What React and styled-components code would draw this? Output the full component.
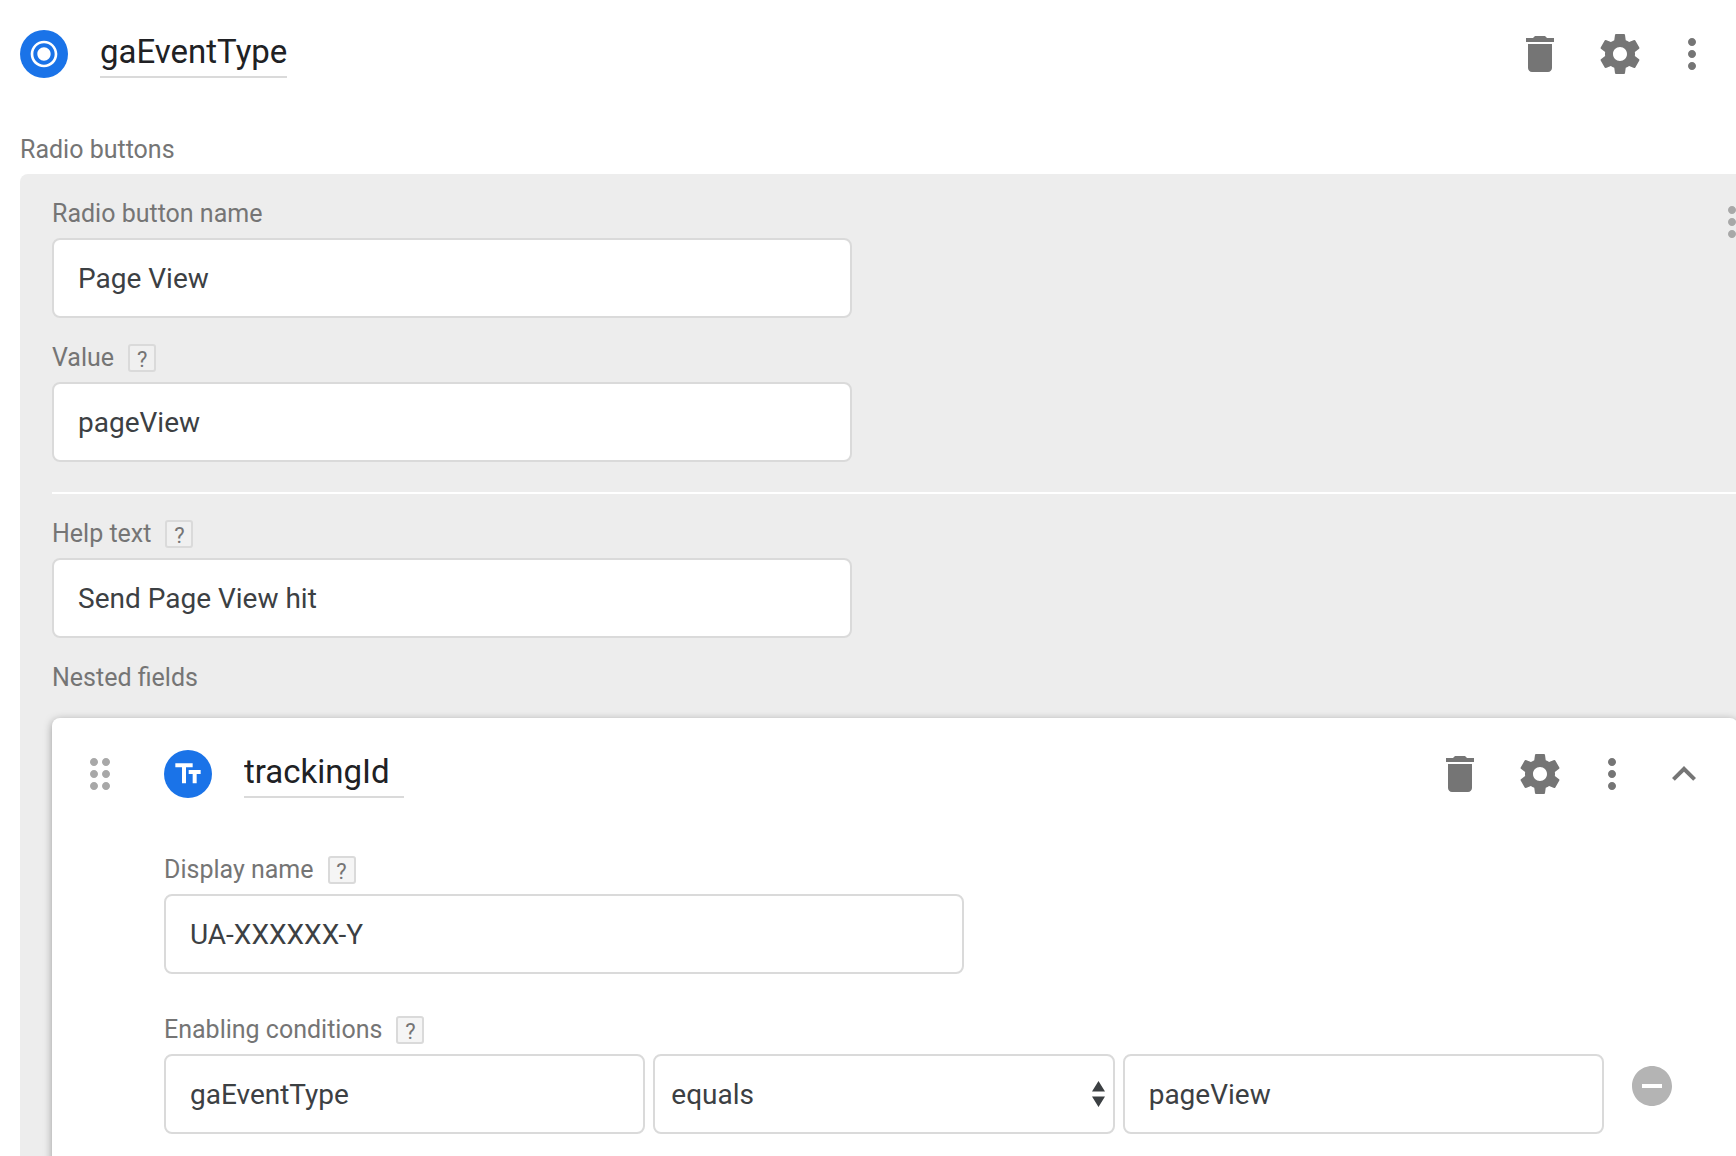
import React, { useState } from 'react';
import styled, { createGlobalStyle } from 'styled-components';

const GlobalStyle = createGlobalStyle`
  * {
    box-sizing: border-box;
  }

  body {
    margin: 0;
    background: #fff;
    font-family: Roboto, 'Liberation Sans', sans-serif;
  }

  button, input, select {
    font-family: inherit;
  }
`;

const Page = styled.main`
  height: 100vh;
  padding: 30px 20px;
  overflow-x: hidden;
  overflow-y: auto;
  scrollbar-width: none;
`;

const Header = styled.header`
  display: flex;
  align-items: center;
  height: 48px;
  margin-bottom: 56px;
`;

const Badge = styled.span`
  display: flex;
  flex: none;
  align-items: center;
  justify-content: center;
  width: 48px;
  height: 48px;
  margin-right: 32px;
  border-radius: 50%;
  background: #1a73e8;
  color: #fff;
`;

const TitleInput = styled.input`
  field-sizing: content;
  min-width: 160px;
  height: 48px;
  padding: 0 0 4px;
  border: 0;
  border-bottom: 2px solid #dadada;
  background: transparent;
  color: #202124;
  font-size: 33px;
  outline: none;
`;

const Actions = styled.div`
  display: flex;
  gap: 24px;
  margin-left: auto;
`;

const IconButton = styled.button`
  display: block;
  flex: none;
  width: 48px;
  height: 48px;
  padding: 0;
  border: 0;
  background: transparent;
  color: ${({ $muted }) => ($muted ? '#a8a8a8' : '#757575')};
  cursor: pointer;

  & + &:nth-child(2) {
    margin-left: 8px;
  }
`;

const DragHandle = styled(IconButton)`
  margin-right: 40px;
  cursor: move;
`;

const LabelRow = styled.div`
  display: flex;
  align-items: center;
  gap: 14px;
  height: 32px;
  margin-bottom: 8px;
  color: #757575;
  font-size: 25px;
  line-height: 32px;
`;

const HelpButton = styled.button`
  width: 28px;
  height: 28px;
  padding: 3px 0 0;
  border: 2px solid #dadada;
  border-radius: 3px;
  background: rgba(255, 255, 255, 0.2);
  color: #757575;
  font-size: 22px;
  line-height: 22px;
  cursor: pointer;
`;

const Panel = styled.section`
  margin-right: -54px;
  padding: 24px 32px 32px;
  border-radius: 8px;
  background: #ededed;
`;

const PanelTop = styled.div`
  display: flex;
  justify-content: space-between;
  margin-right: -18px;
`;

const Fields = styled.div`
  display: flex;
  flex: 1;
  flex-direction: column;
  gap: ${({ $gap }) => $gap || 24}px;
`;

const FieldBox = styled.div`
  width: 100%;
  max-width: ${({ $wide }) => ($wide ? 'none' : '800px')};
`;

const TextInput = styled.input`
  display: block;
  width: 100%;
  min-width: 0;
  height: 80px;
  padding: 0 24px;
  border: 2px solid #dadada;
  border-radius: 8px;
  background: #fff;
  color: #3c4043;
  font-size: 28px;
  outline: none;
`;

const Divider = styled.hr`
  height: 2px;
  margin: 30px -32px 24px 0;
  border: 0;
  background: #fff;
`;

const SectionLabel = styled(LabelRow)`
  margin: 24px 0;
`;

const Card = styled.article`
  padding: 32px 30px 48px 24px;
  border-radius: 8px;
  background: #fff;
  box-shadow: 0 2px 8px rgba(0, 0, 0, 0.35);

  ${HelpButton} {
    background: #f5f5f5;
  }
`;

const CardBody = styled.div`
  padding: 0 32px 0 88px;
`;

const ConditionRow = styled.div`
  display: flex;
  gap: 24px;
`;

const ConditionInputs = styled.div`
  display: flex;
  flex: 1;
  gap: 8px;

  & > input {
    flex: 1 1 480px;
  }
`;

const SelectWrap = styled.div`
  position: relative;
  flex: 1 1 460px;

  svg {
    position: absolute;
    top: 27px;
    right: 10px;
    pointer-events: none;
  }
`;

const Select = styled.select`
  width: 100%;
  height: 80px;
  padding: 0 32px 0 16px;
  border: 2px solid #dadada;
  border-radius: 8px;
  background: #fff;
  color: #3c4043;
  font-size: 28px;
  appearance: none;
  outline: none;
`;

const RemoveButton = styled(IconButton)`
  margin-top: 8px;
  color: #b4b4b4;
`;

const PATHS = {
  trash: 'M6 19c0 1.1.9 2 2 2h8c1.1 0 2-.9 2-2V7H6v12zM19 4h-3.5l-1-1h-5l-1 1H5v2h14V4z',
  gear: 'M19.43 12.98c.04-.32.07-.64.07-.98s-.03-.66-.07-.98l2.11-1.65c.19-.15.24-.42.12-.64l-2-3.46c-.12-.22-.39-.3-.61-.22l-2.49 1c-.52-.4-1.08-.73-1.69-.98l-.38-2.65C14.46 2.18 14.25 2 14 2h-4c-.25 0-.46.18-.49.42l-.38 2.65c-.61.25-1.17.59-1.69.98l-2.49-1c-.23-.09-.49 0-.61.22l-2 3.46c-.13.22-.07.49.12.64l2.11 1.65c-.04.32-.07.65-.07.98s.03.66.07.98l-2.11 1.65c-.19.15-.24.42-.12.64l2 3.46c.12.22.39.3.61.22l2.49-1c.52.4 1.08.73 1.69.98l.38 2.65c.03.24.24.42.49.42h4c.25 0 .46-.18.49-.42l.38-2.65c.61-.25 1.17-.59 1.69-.98l2.49 1c.23.09.49 0 .61-.22l2-3.46c.12-.22.07-.49-.12-.64l-2.11-1.65zM12 15.5c-1.93 0-3.5-1.57-3.5-3.5s1.57-3.5 3.5-3.5 3.5 1.57 3.5 3.5-1.57 3.5-3.5 3.5z',
  more: 'M12 8c1.1 0 2-.9 2-2s-.9-2-2-2-2 .9-2 2 .9 2 2 2zm0 2c-1.1 0-2 .9-2 2s.9 2 2 2 2-.9 2-2-.9-2-2-2zm0 6c-1.1 0-2 .9-2 2s.9 2 2 2 2-.9 2-2-.9-2-2-2z',
  collapse: 'M12 8l-6 6 1.41 1.41L12 10.83l4.59 4.58L18 14z',
  drag: 'M11 18c0 1.1-.9 2-2 2s-2-.9-2-2 .9-2 2-2 2 .9 2 2zm-2-8c-1.1 0-2 .9-2 2s.9 2 2 2 2-.9 2-2-.9-2-2-2zm0-6c-1.1 0-2 .9-2 2s.9 2 2 2 2-.9 2-2-.9-2-2-2zm6 4c1.1 0 2-.9 2-2s-.9-2-2-2-2 .9-2 2 .9 2 2 2zm0 2c-1.1 0-2 .9-2 2s.9 2 2 2 2-.9 2-2-.9-2-2-2zm0 6c-1.1 0-2 .9-2 2s.9 2 2 2 2-.9 2-2-.9-2-2-2z',
  remove: 'M12 2C6.48 2 2 6.48 2 12s4.48 10 10 10 10-4.48 10-10S17.52 2 12 2zm5 11H7v-2h10v2z',
  radio: 'M12 7c-2.76 0-5 2.24-5 5s2.24 5 5 5 5-2.24 5-5-2.24-5-5-5zm0-5C6.48 2 2 6.48 2 12s4.48 10 10 10 10-4.48 10-10S17.52 2 12 2zm0 18c-4.42 0-8-3.58-8-8s3.58-8 8-8 8 3.58 8 8-3.58 8-8 8z',
  textField: 'M2.5 4v3h5v12h3V7h5V4h-13zm19 5h-9v3h3v7h3v-7h3V9z',
};

const Icon = ({ name, size = 48 }) => (
  <svg width={size} height={size} viewBox="0 0 24 24" fill="currentColor" display="block" aria-hidden="true">
    <path d={PATHS[name]} />
  </svg>
);

const FieldLabel = ({ htmlFor, help, children }) => (
  <LabelRow>
    <label htmlFor={htmlFor}>{children}</label>
    {help && <HelpButton type="button">?</HelpButton>}
  </LabelRow>
);

const Field = ({ id, label, help, value }) => (
  <FieldBox>
    <FieldLabel htmlFor={id} help={help}>{label}</FieldLabel>
    <TextInput id={id} type="text" defaultValue={value} />
  </FieldBox>
);

const FieldActions = ({ children }) => (
  <Actions>
    <IconButton type="button" aria-label="Delete"><Icon name="trash" /></IconButton>
    <IconButton type="button" aria-label="Settings"><Icon name="gear" /></IconButton>
    <IconButton type="button" aria-label="More"><Icon name="more" /></IconButton>
    {children}
  </Actions>
);

const NestedField = () => {
  const [open, setOpen] = useState(true);
  const [operator, setOperator] = useState('equals');

  return (
    <Card>
      <Header>
        <DragHandle type="button" $muted aria-label="Reorder"><Icon name="drag" /></DragHandle>
        <Badge><Icon name="textField" size={32} /></Badge>
        <TitleInput aria-label="Parameter name" defaultValue="trackingId" />
        <FieldActions>
          <IconButton type="button" aria-label="Collapse" aria-expanded={open} onClick={() => setOpen(!open)}>
            <Icon name="collapse" />
          </IconButton>
        </FieldActions>
      </Header>
      {open && (
        <CardBody>
          <Fields $gap={40}>
            <Field id="display-name" label="Display name" help value="UA-XXXXXX-Y" />
            <FieldBox $wide>
              <FieldLabel htmlFor="condition-param" help>Enabling conditions</FieldLabel>
              <ConditionRow>
                <ConditionInputs>
                  <TextInput id="condition-param" type="text" defaultValue="gaEventType" />
                  <SelectWrap>
                    <Select aria-label="Operator" value={operator} onChange={(e) => setOperator(e.target.value)}>
                      <option value="equals">equals</option>
                    </Select>
                    <svg width="13" height="26" viewBox="0 0 13 26" fill="#3c4043" aria-hidden="true">
                      <path d="M6.5 0L13 10.5H0zM6.5 26L0 15.5h13z" />
                    </svg>
                  </SelectWrap>
                  <TextInput type="text" aria-label="Condition value" defaultValue="pageView" />
                </ConditionInputs>
                <RemoveButton type="button" aria-label="Remove condition"><Icon name="remove" /></RemoveButton>
              </ConditionRow>
            </FieldBox>
          </Fields>
        </CardBody>
      )}
    </Card>
  );
};

const App = () => (
  <>
    <GlobalStyle />
    <Page>
      <Header>
        <Badge><Icon name="radio" size={32} /></Badge>
        <TitleInput aria-label="Parameter name" defaultValue="gaEventType" />
        <FieldActions />
      </Header>

      <LabelRow>Radio buttons</LabelRow>
      <Panel>
        <PanelTop>
          <Fields>
            <Field id="radio-name" label="Radio button name" value="Page View" />
            <Field id="radio-value" label="Value" help value="pageView" />
          </Fields>
          <IconButton type="button" $muted aria-label="More"><Icon name="more" /></IconButton>
        </PanelTop>
        <Divider />
        <Field id="help-text" label="Help text" help value="Send Page View hit" />
        <SectionLabel>Nested fields</SectionLabel>
        <NestedField />
      </Panel>
    </Page>
  </>
);

export default App;
